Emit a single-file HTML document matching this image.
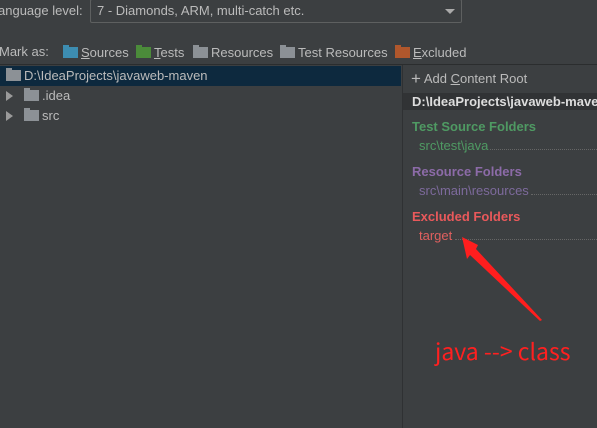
<!DOCTYPE html>
<html><head><meta charset="utf-8"><style>
body{margin:0;width:597px;height:428px;background:#3c3f41;font-family:"Liberation Sans","Noto Sans CJK SC",sans-serif;font-size:13px;color:#bbbbbb;position:relative;overflow:hidden}
.a{position:absolute;white-space:nowrap}
.f{display:inline-block;width:15px;height:11px;vertical-align:-1px;margin-right:3px;position:relative}
.f:before{content:"";position:absolute;left:0;top:-2px;width:6px;height:3px;background:inherit}
u{text-decoration:underline}
.dot{position:absolute;border-bottom:1px dotted #666;height:0}
</style></head><body>
<div class="a" style="left:-2px;top:3px">anguage level:</div>
<div class="a" style="left:90px;top:-1px;width:370px;height:22px;border:1px solid #5e6060;border-radius:2px;background:#3c3f41"></div>
<div class="a" style="left:97px;top:3px">7 - Diamonds, ARM, multi-catch etc.</div>
<div class="a" style="left:445px;top:9px;width:0;height:0;border-left:5px solid transparent;border-right:5px solid transparent;border-top:5px solid #aaa"></div>
<div class="a" style="left:-1px;top:44px">Mark as:</div>
<div class="a" style="left:63px;top:45px"><span class="f" style="background:#3d8db1"></span><u>S</u>ources</div>
<div class="a" style="left:136px;top:45px"><span class="f" style="background:#4b8b3a"></span><u>T</u>ests</div>
<div class="a" style="left:193px;top:45px"><span class="f" style="background:#8c9196"></span>Resources</div>
<div class="a" style="left:280px;top:45px"><span class="f" style="background:#8c9196"></span>Test Resources</div>
<div class="a" style="left:395px;top:45px"><span class="f" style="background:#b0572c"></span><u>E</u>xcluded</div>
<div class="a" style="left:0;top:64px;width:597px;height:1px;background:#2b2d2e"></div>
<div class="a" style="left:0;top:66px;width:401px;height:20px;background:#0d293e"></div>
<div class="a" style="left:402px;top:65px;width:1px;height:363px;background:#2f3133"></div>
<div class="a" style="left:6px;top:68px;color:#bbb"><span class="f" style="background:#8c9196"></span>D:\IdeaProjects\javaweb-maven</div>
<div class="a" style="left:6px;top:91px;width:0;height:0;border-top:5px solid transparent;border-bottom:5px solid transparent;border-left:7px solid #9a9a9a"></div>
<div class="a" style="left:24px;top:88px"><span class="f" style="background:#8c9196"></span>.idea</div>
<div class="a" style="left:6px;top:111px;width:0;height:0;border-top:5px solid transparent;border-bottom:5px solid transparent;border-left:7px solid #9a9a9a"></div>
<div class="a" style="left:24px;top:108px"><span class="f" style="background:#8c9196"></span>src</div>
<div class="a" style="left:411px;top:71px"><span style="font-size:17px;line-height:10px;vertical-align:-1px">+</span> Add <u>C</u>ontent Root</div>
<div class="a" style="left:403px;top:93px;width:194px;height:17px;background:#313335"></div>
<div class="a" style="left:412px;top:94px;font-weight:bold;color:#ddd">D:\IdeaProjects\javaweb-maven</div>
<div class="a" style="left:412px;top:119px;font-weight:bold;color:#4f9a63">Test Source Folders</div>
<div class="a" style="left:419px;top:138px;color:#4f9a63">src\test\java</div>
<div class="dot" style="left:490px;top:149px;width:107px"></div>
<div class="a" style="left:412px;top:164px;font-weight:bold;color:#8c6ba8">Resource Folders</div>
<div class="a" style="left:419px;top:183px;color:#7d6a9c">src\main\resources</div>
<div class="dot" style="left:531px;top:194px;width:66px"></div>
<div class="a" style="left:412px;top:209px;font-weight:bold;color:#e9595b">Excluded Folders</div>
<div class="a" style="left:419px;top:228px;color:#e0605f">target</div>
<div class="dot" style="left:455px;top:239px;width:142px"></div>
<svg class="a" style="left:0;top:0" width="597" height="428"><polygon points="462,237 478,245 476,249 542,320 540,321 470,255 467,259" fill="#ff1e1e"/></svg>
<div class="a" style="left:435px;top:337px;font-size:23px;color:#ff2020;font-family:'Noto Sans CJK SC','Liberation Sans',sans-serif;line-height:26px">java --&gt; class</div>
</body></html>
